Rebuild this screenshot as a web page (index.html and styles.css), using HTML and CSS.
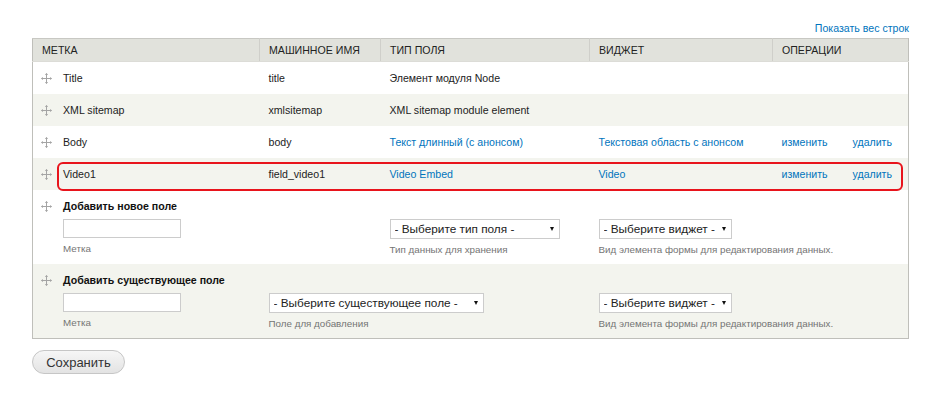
FILE: index.html
```html
<!DOCTYPE html>
<html>
<head>
  <title>Управление полями</title>
  <link rel="stylesheet" href="styles.css">
</head>
<body>
  <div class="page">
    <div class="weight-toggle"><a href="#">Показать вес строк</a></div>

    <table class="field-table">
      <colgroup>
        <col class="col-label">
        <col class="col-machine">
        <col class="col-type">
        <col class="col-widget">
        <col class="col-edit">
        <col class="col-delete">
      </colgroup>
      <thead>
        <tr>
          <th>Метка</th>
          <th>Машинное имя</th>
          <th>Тип поля</th>
          <th>Виджет</th>
          <th colspan="2">Операции</th>
        </tr>
      </thead>
      <tbody>
        <tr class="odd">
          <td><div class="label-cell"><svg class="handle" viewBox="0 0 11 11"><path d="M5.5 0.5v10M0.5 5.5h10"/><path class="tip" d="M5.5 0l-1.6 2h3.2zM5.5 11l-1.6-2h3.2zM0 5.5l2-1.6v3.2zM11 5.5l-2-1.6v3.2z"/></svg>Title</div></td>
          <td>title</td>
          <td>Элемент модуля Node</td>
          <td></td>
          <td></td>
          <td></td>
        </tr>
        <tr class="even">
          <td><div class="label-cell"><svg class="handle" viewBox="0 0 11 11"><path d="M5.5 0.5v10M0.5 5.5h10"/><path class="tip" d="M5.5 0l-1.6 2h3.2zM5.5 11l-1.6-2h3.2zM0 5.5l2-1.6v3.2zM11 5.5l-2-1.6v3.2z"/></svg>XML sitemap</div></td>
          <td>xmlsitemap</td>
          <td>XML sitemap module element</td>
          <td></td>
          <td></td>
          <td></td>
        </tr>
        <tr class="odd">
          <td><div class="label-cell"><svg class="handle" viewBox="0 0 11 11"><path d="M5.5 0.5v10M0.5 5.5h10"/><path class="tip" d="M5.5 0l-1.6 2h3.2zM5.5 11l-1.6-2h3.2zM0 5.5l2-1.6v3.2zM11 5.5l-2-1.6v3.2z"/></svg>Body</div></td>
          <td>body</td>
          <td><a href="#">Текст длинный (с анонсом)</a></td>
          <td><a href="#">Текстовая область с анонсом</a></td>
          <td><a href="#">изменить</a></td>
          <td><a href="#">удалить</a></td>
        </tr>
        <tr class="even">
          <td class="marked"><span class="highlight"></span><div class="label-cell"><svg class="handle" viewBox="0 0 11 11"><path d="M5.5 0.5v10M0.5 5.5h10"/><path class="tip" d="M5.5 0l-1.6 2h3.2zM5.5 11l-1.6-2h3.2zM0 5.5l2-1.6v3.2zM11 5.5l-2-1.6v3.2z"/></svg>Video1</div></td>
          <td>field_video1</td>
          <td><a href="#">Video Embed</a></td>
          <td><a href="#">Video</a></td>
          <td><a href="#">изменить</a></td>
          <td><a href="#">удалить</a></td>
        </tr>
        <tr class="odd form-row">
          <td>
            <div class="label-cell">
              <svg class="handle" viewBox="0 0 11 11"><path d="M5.5 0.5v10M0.5 5.5h10"/><path class="tip" d="M5.5 0l-1.6 2h3.2zM5.5 11l-1.6-2h3.2zM0 5.5l2-1.6v3.2zM11 5.5l-2-1.6v3.2z"/></svg>
              <div class="form-stack">
                <div class="form-title">Добавить новое поле</div>
                <input type="text" class="text-input">
                <div class="description">Метка</div>
              </div>
            </div>
          </td>
          <td class="form-cell"></td>
          <td class="form-cell">
            <span class="select-wrap"><select class="select type-select"><option>- Выберите тип поля -</option></select></span>
            <div class="description">Тип данных для хранения</div>
          </td>
          <td class="form-cell" colspan="3">
            <span class="select-wrap"><select class="select widget-select"><option>- Выберите виджет -</option></select></span>
            <div class="description">Вид элемента формы для редактирования данных.</div>
          </td>
        </tr>
        <tr class="even form-row">
          <td>
            <div class="label-cell">
              <svg class="handle" viewBox="0 0 11 11"><path d="M5.5 0.5v10M0.5 5.5h10"/><path class="tip" d="M5.5 0l-1.6 2h3.2zM5.5 11l-1.6-2h3.2zM0 5.5l2-1.6v3.2zM11 5.5l-2-1.6v3.2z"/></svg>
              <div class="form-stack">
                <div class="form-title">Добавить существующее поле</div>
                <input type="text" class="text-input">
                <div class="description">Метка</div>
              </div>
            </div>
          </td>
          <td class="form-cell" colspan="2">
            <span class="select-wrap"><select class="select existing-select"><option>- Выберите существующее поле -</option></select></span>
            <div class="description">Поле для добавления</div>
          </td>
          <td class="form-cell" colspan="3">
            <span class="select-wrap"><select class="select widget-select"><option>- Выберите виджет -</option></select></span>
            <div class="description">Вид элемента формы для редактирования данных.</div>
          </td>
        </tr>
      </tbody>
    </table>

    <button class="save-button">Сохранить</button>
  </div>
</body>
</html>
```

FILE: styles.css
```css
:root {
  --link-color: #0074bd;
  --text-color: #222;
  --muted-color: #747474;
  --header-bg: #e1e2dc;
  --border-color: #bfbfba;
  --row-even: #f3f4ee;
}

body {
  margin: 0;
  font-family: "Liberation Sans", Arial, sans-serif;
  font-size: 10.6px;
  color: var(--text-color);
  background: #fff;
}

a {
  color: var(--link-color);
  text-decoration: none;
}

.page {
  padding: 21px 28px 0 32px;
}

.weight-toggle {
  text-align: right;
  line-height: 14px;
  margin-bottom: 3px;
}

.field-table {
  width: 100%;
  border-collapse: collapse;
  table-layout: fixed;
  border: 1px solid var(--border-color);
  border-top-color: #c8c8c3;
}

.col-label { width: 227px; }
.col-machine { width: 121px; }
.col-type { width: 209px; }
.col-widget { width: 183px; }
.col-edit { width: 71px; }

.field-table th {
  background: var(--header-bg);
  text-align: left;
  text-transform: uppercase;
  font-weight: normal;
  height: 22px;
  padding: 0 9px;
  border-left: 1px solid #cfcfca;
  border-bottom: 1px solid #dcdcd7;
}

.field-table th:first-child {
  border-left: none;
}

.field-table td {
  height: 32px;
  padding: 0 9px;
  vertical-align: middle;
  white-space: nowrap;
}

.field-table td:first-child {
  padding-left: 8px;
}

.field-table tr.even td {
  background: var(--row-even);
}

.field-table td.marked {
  position: relative;
}

.highlight {
  position: absolute;
  left: 24px;
  top: 4px;
  width: 842px;
  height: 25px;
  border: 2px solid #e8141c;
  border-radius: 6px;
  pointer-events: none;
}

.label-cell {
  display: flex;
  align-items: center;
}

.handle {
  width: 11px;
  height: 11px;
  margin-right: 11px;
  flex: none;
  fill: none;
  stroke: #a4a4a4;
  stroke-width: 1;
}

.handle .tip {
  fill: #a4a4a4;
  stroke: none;
}

.form-row td {
  height: auto;
  vertical-align: top;
  padding-top: 9px;
  padding-bottom: 8px;
}

.form-row .label-cell {
  align-items: flex-start;
}

.form-row .handle {
  margin-top: 2px;
}

.form-row td.form-cell {
  padding-top: 29px;
}

.form-title {
  font-weight: bold;
  line-height: 15px;
  color: #111;
}

.text-input {
  display: block;
  box-sizing: border-box;
  width: 118px;
  height: 19px;
  margin: 5px 0 0;
  border: 1px solid #ccc;
  background: #fff;
}

.description {
  margin-top: 5px;
  font-size: 9.8px;
  line-height: 12px;
  color: var(--muted-color);
}

.select-wrap {
  position: relative;
  display: inline-block;
}

.select-wrap::after {
  content: "";
  position: absolute;
  right: 6px;
  top: 8px;
  border-left: 2.5px solid transparent;
  border-right: 2.5px solid transparent;
  border-top: 4px solid #111;
  pointer-events: none;
}

.select {
  -webkit-appearance: none;
  appearance: none;
  display: block;
  box-sizing: border-box;
  height: 20px;
  padding: 0 14px 0 4px;
  border: 1px solid #ccc;
  border-radius: 0;
  background: #fff;
  font-family: "Liberation Sans", Arial, sans-serif;
  font-size: 11.8px;
  color: #222;
}

.type-select { width: 170px; }
.existing-select { width: 215px; }
.widget-select { width: 133px; }

.save-button {
  margin-top: 11px;
  width: 93px;
  height: 24px;
  border: 1px solid #c6c6c6;
  border-radius: 12px;
  background: linear-gradient(#f6f6f6, #e3e3e3);
  font-family: "Liberation Sans", Arial, sans-serif;
  font-size: 13px;
  color: #333;
  cursor: pointer;
}
```
